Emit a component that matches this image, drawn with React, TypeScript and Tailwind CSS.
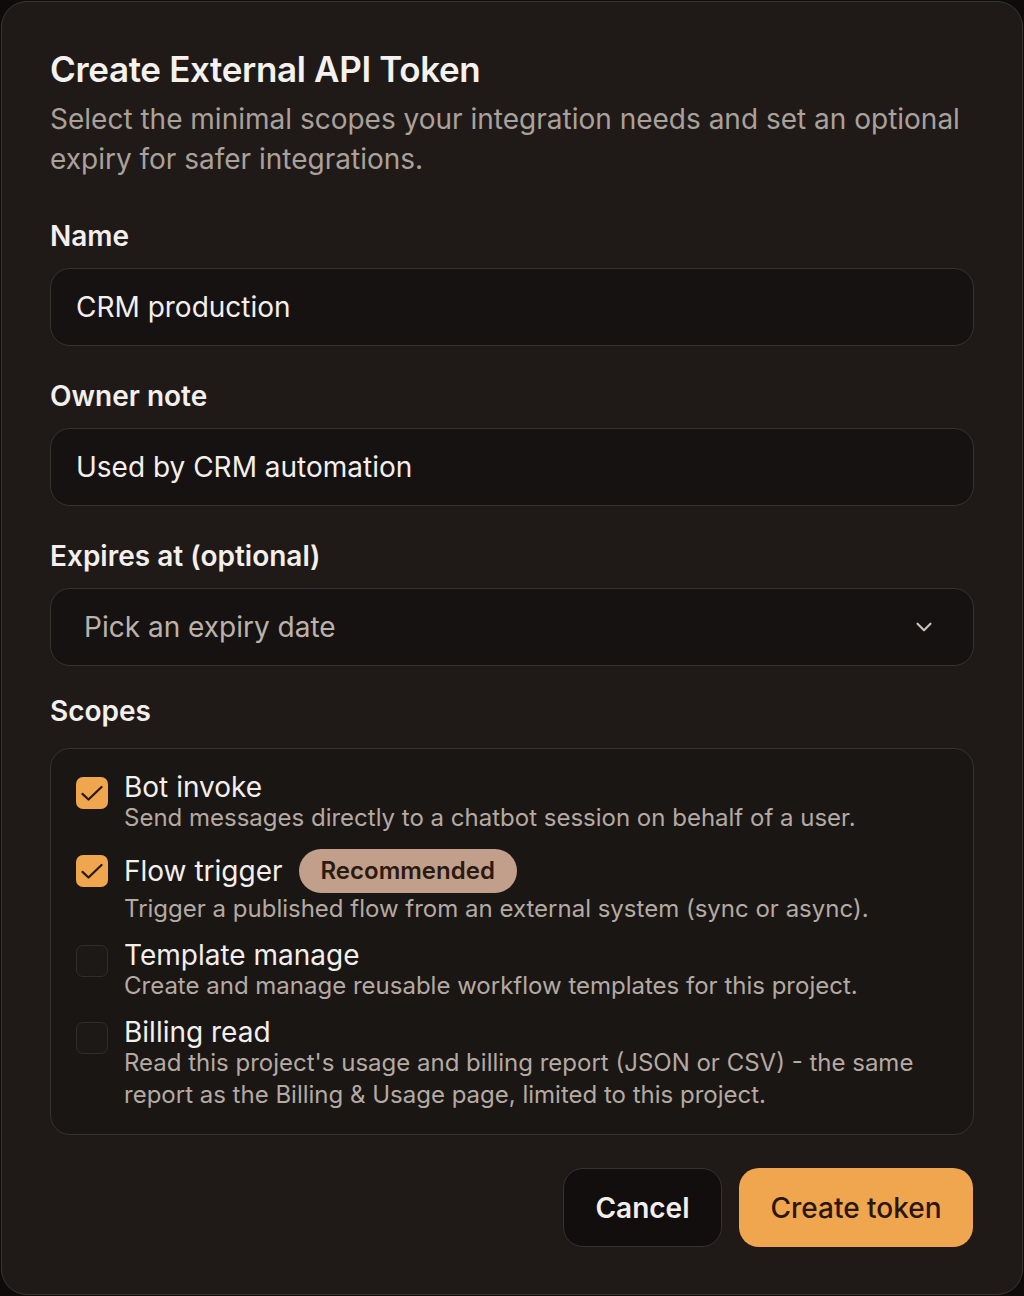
import { ChevronDown } from 'lucide-react'

type Scope = {
  title: string
  description: string
  checked: boolean
  badge?: string
}

const scopes: Scope[] = [
  {
    title: 'Bot invoke',
    description: 'Send messages directly to a chatbot session on behalf of a user.',
    checked: true,
  },
  {
    title: 'Flow trigger',
    description: 'Trigger a published flow from an external system (sync or async).',
    checked: true,
    badge: 'Recommended',
  },
  {
    title: 'Template manage',
    description: 'Create and manage reusable workflow templates for this project.',
    checked: false,
  },
  {
    title: 'Billing read',
    description:
      "Read this project's usage and billing report (JSON or CSV) - the same report as the Billing & Usage page, limited to this project.",
    checked: false,
  },
]

function Checkbox({ checked }: { checked: boolean }) {
  if (checked) {
    return (
      <div className="size-[32px] shrink-0 rounded-[7px] bg-[#f0a54f] flex items-center justify-center">
        <svg width="28" height="28" viewBox="0 0 24 24" fill="none" stroke="#2a1a0e" strokeWidth="1.9" strokeLinecap="round" strokeLinejoin="round">
          <path d="M3.8 12.8l5.2 4.8L20.2 6.8" />
        </svg>
      </div>
    )
  }
  return <div className="size-[32px] shrink-0 rounded-[7px] bg-[#1d1917] border border-[#332d29]" />
}

function Label({ children, className = '' }: { children: React.ReactNode; className?: string }) {
  return <p className={`text-[28px] leading-[36px] font-semibold text-[#f3efec] ${className}`}>{children}</p>
}

export default function App() {
  return (
    <div className="min-h-[1296px] bg-[#0e0c0b] p-px" style={{ fontFamily: 'Inter, "Noto Sans", sans-serif' }}>
      <div className="min-h-[1294px] rounded-[26px] border border-[#3a3531] bg-[#1f1a18] px-[48px] pt-[46px] pb-[47px]">
        <h1 className="text-[35px] leading-[42px] font-semibold tracking-[-0.01em] text-[#f5f1ee]">
          Create External API Token
        </h1>
        <p className="mt-[9px] text-[28px] leading-[40px] text-[#aaa19b]">
          Select the minimal scopes your integration needs and set an optional expiry for safer integrations.
        </p>

        <Label className="mt-[39px]">Name</Label>
        <div className="mt-[14px] h-[78px] rounded-[20px] border border-[#38322e] bg-[#161211] px-[25px] flex items-center text-[28px] text-[#f3efec]">
          CRM production
        </div>

        <Label className="mt-[32px]">Owner note</Label>
        <div className="mt-[14px] h-[78px] rounded-[20px] border border-[#38322e] bg-[#161211] px-[25px] flex items-center text-[28px] text-[#f3efec]">
          Used by CRM automation
        </div>

        <Label className="mt-[32px]">Expires at (optional)</Label>
        <div className="mt-[14px] h-[78px] rounded-[20px] border border-[#38322e] bg-[#161211] pl-[33px] pr-[36px] flex items-center justify-between text-[28px] text-[#bcb2ab]">
          <span>Pick an expiry date</span>
          <ChevronDown size={26} strokeWidth={2} color="#c9c1ba" />
        </div>

        <Label className="mt-[27px]">Scopes</Label>
        <div className="mt-[19px] rounded-[20px] border border-[#38322e] bg-[#1a1614] pl-[25px] pr-[24px] pt-[23px] pb-[23px] flex flex-col gap-[15px]">
          {scopes.map((s) => (
            <div key={s.title} className="flex gap-[16px]">
              <div className={s.badge ? 'mt-[6px]' : 'mt-[5px]'}>
                <Checkbox checked={s.checked} />
              </div>
              <div className="flex-1">
                <div className="flex items-center gap-[16px]">
                  <span className="text-[28px] leading-[30px] text-[#f3efec]">{s.title}</span>
                  {s.badge && (
                    <span className="h-[44px] px-[22px] rounded-full bg-[#c29f8b] text-[#2a1a10] text-[24px] font-semibold flex items-center">
                      {s.badge}
                    </span>
                  )}
                </div>
                <p className="text-[24px] leading-[32px] text-[#b4aaa3]">{s.description}</p>
              </div>
            </div>
          ))}
        </div>

        <div className="mt-[33px] flex justify-end gap-[17px] pr-px">
          <button className="h-[79px] w-[159px] rounded-[20px] border border-[#38322e] bg-[#110e0d] text-[28px] font-semibold text-[#f3efec]">
            Cancel
          </button>
          <button className="h-[79px] w-[234px] rounded-[20px] bg-[#f0a54f] text-[28px] font-medium text-[#2a170a]">
            Create token
          </button>
        </div>
      </div>
    </div>
  )
}
